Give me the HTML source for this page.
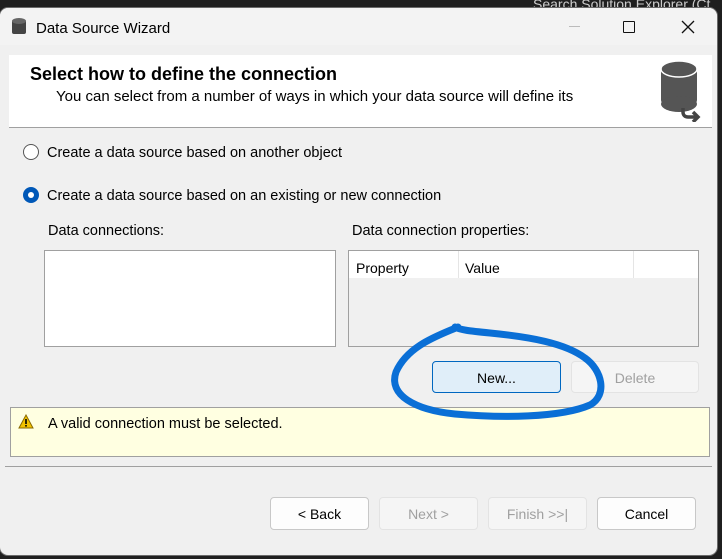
<!DOCTYPE html>
<html><head><style>
*{margin:0;padding:0;box-sizing:border-box}
body{width:722px;height:559px;background:#1f1f1f;position:relative;overflow:hidden;font-family:"Liberation Sans",sans-serif;color:#000}
.a{position:absolute;white-space:nowrap}
.t{margin-top:2px}
.win{position:absolute;left:0;top:8px;width:717px;height:547px;background:#f0f0f0;border-radius:8px;box-shadow:0 0 0 1px #6a6a6a;overflow:hidden}
.btn{position:absolute;height:32px;border:1px solid #c8c8c8;border-radius:4px;background:#fdfdfd;font-size:14px;text-align:center;line-height:32px}
.dis{color:#a0a0a0;background:#f5f5f5;border-color:#e3e3e3}
</style></head><body>
<div class="a" style="left:533px;top:-4px;font-size:14px;color:#ccc">Search Solution Explorer (Ct</div>
<div class="win">
 <div class="a" style="left:0;top:0;width:717px;height:37px;background:#f3f3f3"></div>
 <svg class="a" style="left:12px;top:10px" width="14" height="18"><rect x="0" y="2" width="14" height="14" rx="2" fill="#444"/><ellipse cx="7" cy="3" rx="7" ry="3" fill="#666"/></svg>
 <div class="a t" style="left:36px;top:10px;font-size:15px">Data Source Wizard</div>
 <div class="a" style="left:569px;top:18px;width:11px;height:1px;background:#bbb"></div>
 <div class="a" style="left:623px;top:13px;width:12px;height:12px;border:1.5px solid #111;border-radius:1px"></div>
 <svg class="a" style="left:681px;top:12px" width="14" height="14"><path d="M1 1L13 13M13 1L1 13" stroke="#111" stroke-width="1.3"/></svg>
 <div class="a" style="left:9px;top:47px;width:703px;height:73px;background:#fff;border-bottom:1px solid #a0a0a0"></div>
 <div class="a t" style="left:30px;top:54px;font-size:18px;font-weight:bold">Select how to define the connection</div>
 <div class="a t" style="left:56px;top:78px;font-size:15px">You can select from a number of ways in which your data source will define its</div>
 <svg class="a" style="left:659px;top:50px" width="45" height="64"><rect x="2" y="10" width="36" height="36" rx="4" fill="#555"/><ellipse cx="20" cy="11" rx="18" ry="8" fill="#555" stroke="#fff" stroke-width="1.5"/><ellipse cx="20" cy="46" rx="18" ry="8" fill="#555"/><path d="M24 50v4c0 3 2 5 5 5h10M34 54l5 5-5 5" stroke="#444" stroke-width="3.5" fill="none"/></svg>

 <div class="a" style="left:23px;top:136px;width:16px;height:16px;border:1px solid #555;border-radius:50%;background:#fff"></div>
 <div class="a t" style="left:47px;top:135px;font-size:14.5px">Create a data source based on another object</div>
 <div class="a" style="left:23px;top:179px;width:16px;height:16px;border-radius:50%;background:#0058b8"></div>
 <div class="a" style="left:28px;top:184px;width:6px;height:6px;border-radius:50%;background:#fff"></div>
 <div class="a t" style="left:47px;top:178px;font-size:14.5px">Create a data source based on an existing or new connection</div>
 <div class="a t" style="left:48px;top:213px;font-size:14.5px">Data connections:</div>
 <div class="a t" style="left:352px;top:213px;font-size:14.5px">Data connection properties:</div>
 <div class="a" style="left:44px;top:242px;width:292px;height:97px;background:#fff;border:1px solid #a0a0a0"></div>
 <div class="a" style="left:348px;top:242px;width:351px;height:97px;background:#f0f0f0;border:1px solid #a0a0a0">
  <div class="a" style="left:0;top:0;width:349px;height:27px;background:#fff"></div>
  <div class="a" style="left:109px;top:0;width:1px;height:27px;background:#e5e5e5"></div>
  <div class="a" style="left:284px;top:0;width:1px;height:27px;background:#e5e5e5"></div>
  <div class="a t" style="left:7px;top:7px;font-size:14px">Property</div>
  <div class="a t" style="left:116px;top:7px;font-size:14px">Value</div>
 </div>
 <div class="btn" style="left:432px;top:353px;width:129px;background:#e0eef9;border-color:#0067c0">New...</div>
 <div class="btn dis" style="left:571px;top:353px;width:128px">Delete</div>
 <div class="a" style="left:10px;top:399px;width:700px;height:50px;background:#ffffe1;border:1px solid #a0a0a0"></div>
 <svg class="a" style="left:18px;top:406px" width="16" height="15"><path d="M8 1L15 14H1Z" fill="#f2c200" stroke="#8a6a00" stroke-width="1"/><rect x="7.2" y="5" width="1.6" height="5" fill="#000"/><rect x="7.2" y="11" width="1.6" height="1.6" fill="#000"/></svg>
 <div class="a t" style="left:48px;top:406px;font-size:14.5px">A valid connection must be selected.</div>
 <div class="a" style="left:5px;top:458px;width:707px;height:1px;background:#a0a0a0"></div>
 <div class="btn" style="left:270px;top:489px;width:99px;height:33px">&lt; Back</div>
 <div class="btn dis" style="left:379px;top:489px;width:99px;height:33px">Next &gt;</div>
 <div class="btn dis" style="left:488px;top:489px;width:99px;height:33px">Finish &gt;&gt;|</div>
 <div class="btn" style="left:597px;top:489px;width:99px;height:33px">Cancel</div>
</div>
<svg class="a" style="left:0;top:0" width="722" height="559"><path d="M458 327C440 335 408 345 396 372C388 395 415 410 455 414C500 418 560 418 590 405C608 395 602 370 585 358C565 343 530 337 490 333C470 331 460 330 455 327" stroke="#0a6fd6" stroke-width="7" fill="none" stroke-linecap="round"/></svg>
</body></html>
